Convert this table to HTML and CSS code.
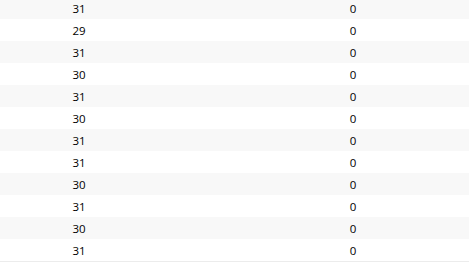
FILE: index.html
```html
<!DOCTYPE html>
<html>
<head>
<meta charset="utf-8">
<link rel="stylesheet" href="styles.css">
</head>
<body>
<div class="table">
  <div class="row odd"><span class="c1">31</span><span class="c2"></span><span class="c3">0</span></div>
  <div class="row"><span class="c1">29</span><span class="c2"></span><span class="c3">0</span></div>
  <div class="row odd"><span class="c1">31</span><span class="c2"></span><span class="c3">0</span></div>
  <div class="row"><span class="c1">30</span><span class="c2"></span><span class="c3">0</span></div>
  <div class="row odd"><span class="c1">31</span><span class="c2"></span><span class="c3">0</span></div>
  <div class="row"><span class="c1">30</span><span class="c2"></span><span class="c3">0</span></div>
  <div class="row odd"><span class="c1">31</span><span class="c2"></span><span class="c3">0</span></div>
  <div class="row"><span class="c1">31</span><span class="c2"></span><span class="c3">0</span></div>
  <div class="row odd"><span class="c1">30</span><span class="c2"></span><span class="c3">0</span></div>
  <div class="row"><span class="c1">31</span><span class="c2"></span><span class="c3">0</span></div>
  <div class="row odd"><span class="c1">30</span><span class="c2"></span><span class="c3">0</span></div>
  <div class="row last"><span class="c1">31</span><span class="c2"></span><span class="c3">0</span></div>
</div>
</body>
</html>
```
FILE: styles.css
```css
html, body {
  margin: 0;
  padding: 0;
  background: #fff;
  overflow: hidden;
}
.table {
  margin-top: -3px;
  font-family: "Open Sans", "Noto Sans", sans-serif;
  font-size: 11.5px;
  color: #000;
}
.row {
  display: grid;
  grid-template-columns: 158px 79px 1fr;
  height: 22px;
  align-items: center;
}
.row.odd {
  background: #f8f8f8;
}
.row.last {
  border-bottom: 1px solid #ececec;
}
.c1, .c3 {
  text-align: center;
}
```
